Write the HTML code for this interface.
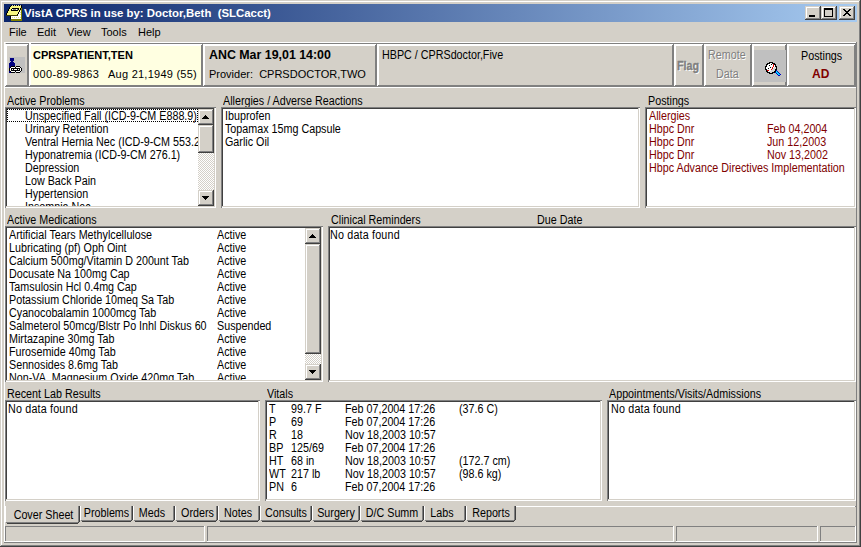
<!DOCTYPE html><html><head><meta charset="utf-8"><style>
html,body{margin:0;padding:0;width:861px;height:547px;overflow:hidden;background:#d4d0c8}
body div{position:absolute}
.t{font-family:"Liberation Sans",sans-serif;line-height:13px;white-space:pre;color:#000;font-size:12px;transform:scaleX(.895);transform-origin:0 0}
.u{font-family:"Liberation Sans",sans-serif;line-height:13px;white-space:pre;color:#000;font-size:11px}
svg{position:absolute}
</style></head><body>
<div style="left:0px;top:0px;width:861px;height:547px;background:#d4d0c8;"></div>
<div style="left:1px;top:1px;width:858px;height:1px;background:#ffffff;"></div>
<div style="left:1px;top:1px;width:1px;height:544px;background:#ffffff;"></div>
<div style="left:1px;top:545px;width:859px;height:1px;background:#808080;"></div>
<div style="left:859px;top:1px;width:1px;height:545px;background:#808080;"></div>
<div style="left:0px;top:546px;width:861px;height:1px;background:#404040;"></div>
<div style="left:860px;top:0px;width:1px;height:547px;background:#404040;"></div>
<div style="left:4px;top:4px;width:853px;height:18px;background:linear-gradient(to right,#0a246a,#a6caf0);"></div>
<svg style="position:absolute;left:5px;top:4px" width="18" height="17" shape-rendering="crispEdges"><rect x="13" y="4" width="3" height="8" fill="#ffffff"/><rect x="6" y="12" width="10" height="3" fill="#ffffff"/><rect x="7" y="13" width="1" height="1" fill="#e0e080"/><rect x="9" y="13" width="1" height="1" fill="#e0e080"/><rect x="11" y="13" width="1" height="1" fill="#e0e080"/><rect x="13" y="13" width="1" height="1" fill="#e0e080"/><rect x="15" y="13" width="1" height="1" fill="#e0e080"/><rect x="15" y="6" width="1" height="1" fill="#e0e080"/><rect x="15" y="8" width="1" height="1" fill="#e0e080"/><rect x="15" y="10" width="1" height="1" fill="#e0e080"/><rect x="16" y="4" width="1" height="13" fill="#808000"/><rect x="6" y="15" width="11" height="2" fill="#808000"/><rect x="5" y="12" width="1" height="3" fill="#000"/><rect x="6" y="1" width="11" height="1" fill="#000"/><rect x="7" y="1" width="1" height="1" fill="#c8c8c8"/><rect x="9" y="1" width="1" height="1" fill="#c8c8c8"/><rect x="11" y="1" width="1" height="1" fill="#c8c8c8"/><rect x="13" y="1" width="1" height="1" fill="#c8c8c8"/><rect x="15" y="1" width="1" height="1" fill="#c8c8c8"/><rect x="5" y="2" width="1" height="1" fill="#000"/><rect x="6" y="2" width="10" height="1" fill="#f8f880"/><rect x="16" y="2" width="1" height="1" fill="#000"/><rect x="4" y="3" width="1" height="1" fill="#000"/><rect x="5" y="3" width="11" height="1" fill="#f8f880"/><rect x="16" y="3" width="1" height="1" fill="#000"/><rect x="4" y="4" width="1" height="1" fill="#000"/><rect x="5" y="4" width="10" height="1" fill="#f8f880"/><rect x="15" y="4" width="1" height="1" fill="#000"/><rect x="3" y="5" width="1" height="1" fill="#000"/><rect x="4" y="5" width="11" height="1" fill="#f8f880"/><rect x="15" y="5" width="1" height="1" fill="#000"/><rect x="3" y="6" width="1" height="1" fill="#000"/><rect x="4" y="6" width="10" height="1" fill="#f8f880"/><rect x="14" y="6" width="1" height="1" fill="#000"/><rect x="2" y="7" width="1" height="1" fill="#000"/><rect x="3" y="7" width="11" height="1" fill="#f8f880"/><rect x="14" y="7" width="1" height="1" fill="#000"/><rect x="2" y="8" width="1" height="1" fill="#000"/><rect x="3" y="8" width="10" height="1" fill="#f8f880"/><rect x="13" y="8" width="1" height="1" fill="#000"/><rect x="1" y="9" width="1" height="1" fill="#000"/><rect x="2" y="9" width="11" height="1" fill="#f8f880"/><rect x="13" y="9" width="1" height="1" fill="#000"/><rect x="1" y="10" width="1" height="1" fill="#000"/><rect x="2" y="10" width="10" height="1" fill="#f8f880"/><rect x="12" y="10" width="1" height="1" fill="#000"/><rect x="1" y="11" width="12" height="1" fill="#404000"/><rect x="7" y="4" width="7" height="1" fill="#000"/><rect x="6" y="5" width="1" height="1" fill="#000"/><rect x="7" y="5" width="6" height="1" fill="#808080"/><rect x="13" y="5" width="1" height="1" fill="#000"/><rect x="6" y="6" width="7" height="1" fill="#000"/><rect x="7" y="5" width="1" height="1" fill="#ffffff"/><rect x="11" y="5" width="1" height="1" fill="#ffffff"/></svg>
<div class="u" style="left:24px;top:7px;color:#fff;font-weight:bold;font-size:11.4px;">VistA CPRS in use by: Doctor,Beth&nbsp; (SLCacct)</div>
<div style="left:805px;top:6px;width:16px;height:14px;background:#d4d0c8;"></div>
<div style="left:805px;top:19px;width:16px;height:1px;background:#404040;"></div>
<div style="left:820px;top:6px;width:1px;height:14px;background:#404040;"></div>
<div style="left:805px;top:6px;width:15px;height:1px;background:#d4d0c8;"></div>
<div style="left:805px;top:6px;width:1px;height:13px;background:#d4d0c8;"></div>
<div style="left:806px;top:18px;width:14px;height:1px;background:#808080;"></div>
<div style="left:819px;top:7px;width:1px;height:12px;background:#808080;"></div>
<div style="left:806px;top:7px;width:13px;height:1px;background:#ffffff;"></div>
<div style="left:806px;top:7px;width:1px;height:11px;background:#ffffff;"></div>
<div style="left:821px;top:6px;width:16px;height:14px;background:#d4d0c8;"></div>
<div style="left:821px;top:19px;width:16px;height:1px;background:#404040;"></div>
<div style="left:836px;top:6px;width:1px;height:14px;background:#404040;"></div>
<div style="left:821px;top:6px;width:15px;height:1px;background:#d4d0c8;"></div>
<div style="left:821px;top:6px;width:1px;height:13px;background:#d4d0c8;"></div>
<div style="left:822px;top:18px;width:14px;height:1px;background:#808080;"></div>
<div style="left:835px;top:7px;width:1px;height:12px;background:#808080;"></div>
<div style="left:822px;top:7px;width:13px;height:1px;background:#ffffff;"></div>
<div style="left:822px;top:7px;width:1px;height:11px;background:#ffffff;"></div>
<div style="left:839px;top:6px;width:16px;height:14px;background:#d4d0c8;"></div>
<div style="left:839px;top:19px;width:16px;height:1px;background:#404040;"></div>
<div style="left:854px;top:6px;width:1px;height:14px;background:#404040;"></div>
<div style="left:839px;top:6px;width:15px;height:1px;background:#d4d0c8;"></div>
<div style="left:839px;top:6px;width:1px;height:13px;background:#d4d0c8;"></div>
<div style="left:840px;top:18px;width:14px;height:1px;background:#808080;"></div>
<div style="left:853px;top:7px;width:1px;height:12px;background:#808080;"></div>
<div style="left:840px;top:7px;width:13px;height:1px;background:#ffffff;"></div>
<div style="left:840px;top:7px;width:1px;height:11px;background:#ffffff;"></div>
<div style="left:809px;top:15px;width:6px;height:2px;background:#000;"></div>
<div style="left:824px;top:8px;width:9px;height:9px;background:transparent;border:1px solid #000;border-top-width:2px;box-sizing:border-box;"></div>
<div style="left:843px;top:9px;width:1px;height:1px;background:#000;"></div>
<div style="left:844px;top:9px;width:1px;height:1px;background:#000;"></div>
<div style="left:849px;top:9px;width:1px;height:1px;background:#000;"></div>
<div style="left:850px;top:9px;width:1px;height:1px;background:#000;"></div>
<div style="left:844px;top:10px;width:1px;height:1px;background:#000;"></div>
<div style="left:845px;top:10px;width:1px;height:1px;background:#000;"></div>
<div style="left:848px;top:10px;width:1px;height:1px;background:#000;"></div>
<div style="left:849px;top:10px;width:1px;height:1px;background:#000;"></div>
<div style="left:845px;top:11px;width:1px;height:1px;background:#000;"></div>
<div style="left:846px;top:11px;width:1px;height:1px;background:#000;"></div>
<div style="left:847px;top:11px;width:1px;height:1px;background:#000;"></div>
<div style="left:848px;top:11px;width:1px;height:1px;background:#000;"></div>
<div style="left:846px;top:12px;width:1px;height:1px;background:#000;"></div>
<div style="left:847px;top:12px;width:1px;height:1px;background:#000;"></div>
<div style="left:845px;top:13px;width:1px;height:1px;background:#000;"></div>
<div style="left:846px;top:13px;width:1px;height:1px;background:#000;"></div>
<div style="left:847px;top:13px;width:1px;height:1px;background:#000;"></div>
<div style="left:848px;top:13px;width:1px;height:1px;background:#000;"></div>
<div style="left:844px;top:14px;width:1px;height:1px;background:#000;"></div>
<div style="left:845px;top:14px;width:1px;height:1px;background:#000;"></div>
<div style="left:848px;top:14px;width:1px;height:1px;background:#000;"></div>
<div style="left:849px;top:14px;width:1px;height:1px;background:#000;"></div>
<div style="left:843px;top:15px;width:1px;height:1px;background:#000;"></div>
<div style="left:844px;top:15px;width:1px;height:1px;background:#000;"></div>
<div style="left:849px;top:15px;width:1px;height:1px;background:#000;"></div>
<div style="left:850px;top:15px;width:1px;height:1px;background:#000;"></div>
<div class="u" style="left:9px;top:26px;">File</div>
<div class="u" style="left:37px;top:26px;">Edit</div>
<div class="u" style="left:67px;top:26px;">View</div>
<div class="u" style="left:101px;top:26px;">Tools</div>
<div class="u" style="left:138px;top:26px;">Help</div>
<div style="left:4px;top:42px;width:852px;height:1px;background:#ffffff;"></div>
<div style="left:4px;top:42px;width:1px;height:500px;background:#ffffff;"></div>
<div style="left:856px;top:42px;width:1px;height:501px;background:#808080;"></div>
<div style="left:4px;top:542px;width:853px;height:1px;background:#808080;"></div>
<div style="left:6px;top:43px;width:851px;height:1px;background:#808080;"></div>
<div style="left:4px;top:87px;width:852px;height:1px;background:#ffffff;"></div>
<div style="left:5px;top:44px;width:24px;height:43px;background:#d4d0c8;"></div>
<div style="left:5px;top:44px;width:24px;height:2px;background:#ffffff;"></div>
<div style="left:5px;top:44px;width:2px;height:43px;background:#ffffff;"></div>
<div style="left:27px;top:44px;width:2px;height:43px;background:#808080;"></div>
<div style="left:5px;top:85px;width:24px;height:2px;background:#808080;"></div>
<div style="left:27px;top:44px;width:1px;height:1px;background:#ffffff;"></div>
<div style="left:5px;top:85px;width:1px;height:1px;background:#ffffff;"></div>
<div style="left:29px;top:44px;width:174px;height:43px;background:#ffffe1;"></div>
<div style="left:29px;top:44px;width:174px;height:2px;background:#ffffff;"></div>
<div style="left:29px;top:44px;width:2px;height:43px;background:#ffffff;"></div>
<div style="left:201px;top:44px;width:2px;height:43px;background:#808080;"></div>
<div style="left:29px;top:85px;width:174px;height:2px;background:#808080;"></div>
<div style="left:201px;top:44px;width:1px;height:1px;background:#ffffff;"></div>
<div style="left:29px;top:85px;width:1px;height:1px;background:#ffffff;"></div>
<div style="left:29px;top:43px;width:2px;height:1px;background:#ffffff;"></div>
<div style="left:203px;top:44px;width:174px;height:43px;background:#d4d0c8;"></div>
<div style="left:203px;top:44px;width:174px;height:2px;background:#ffffff;"></div>
<div style="left:203px;top:44px;width:2px;height:43px;background:#ffffff;"></div>
<div style="left:375px;top:44px;width:2px;height:43px;background:#808080;"></div>
<div style="left:203px;top:85px;width:174px;height:2px;background:#808080;"></div>
<div style="left:375px;top:44px;width:1px;height:1px;background:#ffffff;"></div>
<div style="left:203px;top:85px;width:1px;height:1px;background:#ffffff;"></div>
<div style="left:377px;top:44px;width:297px;height:43px;background:#d4d0c8;"></div>
<div style="left:377px;top:44px;width:297px;height:2px;background:#ffffff;"></div>
<div style="left:377px;top:44px;width:2px;height:43px;background:#ffffff;"></div>
<div style="left:672px;top:44px;width:2px;height:43px;background:#808080;"></div>
<div style="left:377px;top:85px;width:297px;height:2px;background:#808080;"></div>
<div style="left:672px;top:44px;width:1px;height:1px;background:#ffffff;"></div>
<div style="left:377px;top:85px;width:1px;height:1px;background:#ffffff;"></div>
<div style="left:674px;top:44px;width:30px;height:43px;background:#d4d0c8;"></div>
<div style="left:674px;top:44px;width:30px;height:2px;background:#ffffff;"></div>
<div style="left:674px;top:44px;width:2px;height:43px;background:#ffffff;"></div>
<div style="left:702px;top:44px;width:2px;height:43px;background:#808080;"></div>
<div style="left:674px;top:85px;width:30px;height:2px;background:#808080;"></div>
<div style="left:702px;top:44px;width:1px;height:1px;background:#ffffff;"></div>
<div style="left:674px;top:85px;width:1px;height:1px;background:#ffffff;"></div>
<div style="left:704px;top:44px;width:48px;height:43px;background:#d4d0c8;"></div>
<div style="left:704px;top:44px;width:48px;height:2px;background:#ffffff;"></div>
<div style="left:704px;top:44px;width:2px;height:43px;background:#ffffff;"></div>
<div style="left:750px;top:44px;width:2px;height:43px;background:#808080;"></div>
<div style="left:704px;top:85px;width:48px;height:2px;background:#808080;"></div>
<div style="left:750px;top:44px;width:1px;height:1px;background:#ffffff;"></div>
<div style="left:704px;top:85px;width:1px;height:1px;background:#ffffff;"></div>
<div style="left:752px;top:44px;width:35px;height:43px;background:#d4d0c8;"></div>
<div style="left:752px;top:44px;width:35px;height:2px;background:#ffffff;"></div>
<div style="left:752px;top:44px;width:2px;height:43px;background:#ffffff;"></div>
<div style="left:785px;top:44px;width:2px;height:43px;background:#808080;"></div>
<div style="left:752px;top:85px;width:35px;height:2px;background:#808080;"></div>
<div style="left:785px;top:44px;width:1px;height:1px;background:#ffffff;"></div>
<div style="left:752px;top:85px;width:1px;height:1px;background:#ffffff;"></div>
<div style="left:787px;top:44px;width:69px;height:43px;background:#d4d0c8;"></div>
<div style="left:787px;top:44px;width:69px;height:2px;background:#ffffff;"></div>
<div style="left:787px;top:44px;width:2px;height:43px;background:#ffffff;"></div>
<div style="left:854px;top:44px;width:2px;height:43px;background:#808080;"></div>
<div style="left:787px;top:85px;width:69px;height:2px;background:#808080;"></div>
<div style="left:854px;top:44px;width:1px;height:1px;background:#ffffff;"></div>
<div style="left:787px;top:85px;width:1px;height:1px;background:#ffffff;"></div>
<div style="left:9px;top:57px;width:16px;height:16px;background:#c0c0c0;"></div>
<svg style="position:absolute;left:9px;top:57px" width="16" height="16" shape-rendering="crispEdges"><rect x="1" y="1" width="4" height="3" fill="#000080"/><rect x="2" y="4" width="2" height="1" fill="#000080"/><rect x="1" y="5" width="4" height="1" fill="#000080"/><rect x="0" y="6" width="6" height="10" fill="#000080"/><rect x="2" y="9" width="1" height="1" fill="#000"/><rect x="3" y="9" width="1" height="1" fill="#000"/><rect x="4" y="9" width="1" height="1" fill="#000"/><rect x="5" y="9" width="1" height="1" fill="#000"/><rect x="7" y="9" width="1" height="1" fill="#000"/><rect x="8" y="9" width="1" height="1" fill="#000"/><rect x="9" y="9" width="1" height="1" fill="#000"/><rect x="10" y="9" width="1" height="1" fill="#000"/><rect x="1" y="10" width="1" height="1" fill="#000"/><rect x="2" y="10" width="1" height="1" fill="#fff"/><rect x="3" y="10" width="1" height="1" fill="#fff"/><rect x="4" y="10" width="1" height="1" fill="#fff"/><rect x="5" y="10" width="1" height="1" fill="#fff"/><rect x="6" y="10" width="1" height="1" fill="#000"/><rect x="7" y="10" width="1" height="1" fill="#fff"/><rect x="8" y="10" width="1" height="1" fill="#fff"/><rect x="9" y="10" width="1" height="1" fill="#fff"/><rect x="10" y="10" width="1" height="1" fill="#fff"/><rect x="11" y="10" width="1" height="1" fill="#000"/><rect x="0" y="11" width="1" height="1" fill="#000"/><rect x="1" y="11" width="1" height="1" fill="#fff"/><rect x="2" y="11" width="1" height="1" fill="#000"/><rect x="3" y="11" width="1" height="1" fill="#000"/><rect x="4" y="11" width="1" height="1" fill="#000"/><rect x="5" y="11" width="1" height="1" fill="#000"/><rect x="6" y="11" width="1" height="1" fill="#000"/><rect x="7" y="11" width="1" height="1" fill="#000"/><rect x="8" y="11" width="1" height="1" fill="#000"/><rect x="9" y="11" width="1" height="1" fill="#000"/><rect x="10" y="11" width="1" height="1" fill="#000"/><rect x="11" y="11" width="1" height="1" fill="#fff"/><rect x="12" y="11" width="1" height="1" fill="#000"/><rect x="0" y="12" width="1" height="1" fill="#000"/><rect x="1" y="12" width="1" height="1" fill="#fff"/><rect x="2" y="12" width="1" height="1" fill="#000"/><rect x="3" y="12" width="1" height="1" fill="#fff"/><rect x="4" y="12" width="1" height="1" fill="#000"/><rect x="5" y="12" width="1" height="1" fill="#fff"/><rect x="6" y="12" width="1" height="1" fill="#fff"/><rect x="7" y="12" width="1" height="1" fill="#fff"/><rect x="8" y="12" width="1" height="1" fill="#000"/><rect x="9" y="12" width="1" height="1" fill="#fff"/><rect x="10" y="12" width="1" height="1" fill="#000"/><rect x="11" y="12" width="1" height="1" fill="#fff"/><rect x="12" y="12" width="1" height="1" fill="#000"/><rect x="0" y="13" width="1" height="1" fill="#000"/><rect x="1" y="13" width="1" height="1" fill="#fff"/><rect x="2" y="13" width="1" height="1" fill="#000"/><rect x="3" y="13" width="1" height="1" fill="#000"/><rect x="4" y="13" width="1" height="1" fill="#000"/><rect x="5" y="13" width="1" height="1" fill="#000"/><rect x="6" y="13" width="1" height="1" fill="#000"/><rect x="7" y="13" width="1" height="1" fill="#000"/><rect x="8" y="13" width="1" height="1" fill="#000"/><rect x="9" y="13" width="1" height="1" fill="#000"/><rect x="10" y="13" width="1" height="1" fill="#000"/><rect x="11" y="13" width="1" height="1" fill="#fff"/><rect x="12" y="13" width="1" height="1" fill="#000"/><rect x="1" y="14" width="1" height="1" fill="#000"/><rect x="2" y="14" width="1" height="1" fill="#fff"/><rect x="3" y="14" width="1" height="1" fill="#fff"/><rect x="4" y="14" width="1" height="1" fill="#fff"/><rect x="5" y="14" width="1" height="1" fill="#fff"/><rect x="6" y="14" width="1" height="1" fill="#000"/><rect x="7" y="14" width="1" height="1" fill="#fff"/><rect x="8" y="14" width="1" height="1" fill="#fff"/><rect x="9" y="14" width="1" height="1" fill="#fff"/><rect x="10" y="14" width="1" height="1" fill="#fff"/><rect x="11" y="14" width="1" height="1" fill="#000"/><rect x="2" y="15" width="1" height="1" fill="#000"/><rect x="3" y="15" width="1" height="1" fill="#000"/><rect x="4" y="15" width="1" height="1" fill="#000"/><rect x="5" y="15" width="1" height="1" fill="#000"/><rect x="7" y="15" width="1" height="1" fill="#000"/><rect x="8" y="15" width="1" height="1" fill="#000"/><rect x="9" y="15" width="1" height="1" fill="#000"/><rect x="10" y="15" width="1" height="1" fill="#000"/></svg>
<div class="u" style="left:33px;top:49px;font-weight:bold;">CPRSPATIENT,TEN</div>
<div class="u" style="left:33px;top:68px;letter-spacing:0.35px;">000-89-9863</div>
<div class="u" style="left:108px;top:68px;letter-spacing:0.25px;">Aug 21,1949 (55)</div>
<div class="u" style="left:209px;top:49px;font-weight:bold;font-size:12.4px;">ANC Mar 19,01 14:00</div>
<div class="u" style="left:209px;top:68px;">Provider:&nbsp; CPRSDOCTOR,TWO</div>
<div class="t" style="left:382px;top:49px;">HBPC / CPRSdoctor,Five</div>
<div class="t" style="left:677px;top:60px;font-weight:bold;color:#808080;text-shadow:1px 1px #fff;-webkit-text-stroke:0.35px #808080;">Flag</div>
<div class="t" style="left:708px;top:49px;color:#808080;text-shadow:1px 1px #fff;">Remote</div>
<div class="t" style="left:716px;top:68px;color:#808080;text-shadow:1px 1px #fff;">Data</div>
<div style="left:754px;top:50px;width:32px;height:32px;background:#c0c0c0;"></div>
<svg style="position:absolute;left:765px;top:62px" width="16" height="16" shape-rendering="crispEdges"><rect x="4" y="0" width="1" height="1" fill="#000"/><rect x="5" y="0" width="1" height="1" fill="#000"/><rect x="6" y="0" width="1" height="1" fill="#000"/><rect x="7" y="0" width="1" height="1" fill="#000"/><rect x="2" y="1" width="1" height="1" fill="#000"/><rect x="3" y="1" width="1" height="1" fill="#000"/><rect x="4" y="1" width="1" height="1" fill="#000"/><rect x="5" y="1" width="1" height="1" fill="#fff"/><rect x="6" y="1" width="1" height="1" fill="#fff"/><rect x="7" y="1" width="1" height="1" fill="#000"/><rect x="8" y="1" width="1" height="1" fill="#000"/><rect x="9" y="1" width="1" height="1" fill="#000"/><rect x="1" y="2" width="1" height="1" fill="#000"/><rect x="2" y="2" width="1" height="1" fill="#000"/><rect x="3" y="2" width="1" height="1" fill="#fff"/><rect x="4" y="2" width="1" height="1" fill="#fff"/><rect x="5" y="2" width="1" height="1" fill="#fff"/><rect x="6" y="2" width="1" height="1" fill="#000"/><rect x="7" y="2" width="1" height="1" fill="#fff"/><rect x="8" y="2" width="1" height="1" fill="#e00000"/><rect x="9" y="2" width="1" height="1" fill="#000"/><rect x="10" y="2" width="1" height="1" fill="#000"/><rect x="1" y="3" width="1" height="1" fill="#000"/><rect x="2" y="3" width="1" height="1" fill="#fff"/><rect x="3" y="3" width="1" height="1" fill="#fff"/><rect x="4" y="3" width="1" height="1" fill="#000"/><rect x="5" y="3" width="1" height="1" fill="#fff"/><rect x="6" y="3" width="1" height="1" fill="#fff"/><rect x="7" y="3" width="1" height="1" fill="#fff"/><rect x="8" y="3" width="1" height="1" fill="#e00000"/><rect x="9" y="3" width="1" height="1" fill="#fff"/><rect x="10" y="3" width="1" height="1" fill="#000"/><rect x="0" y="4" width="1" height="1" fill="#000"/><rect x="1" y="4" width="1" height="1" fill="#000"/><rect x="2" y="4" width="1" height="1" fill="#fff"/><rect x="3" y="4" width="1" height="1" fill="#fff"/><rect x="4" y="4" width="1" height="1" fill="#fff"/><rect x="5" y="4" width="1" height="1" fill="#fff"/><rect x="6" y="4" width="1" height="1" fill="#fff"/><rect x="7" y="4" width="1" height="1" fill="#fff"/><rect x="8" y="4" width="1" height="1" fill="#e00000"/><rect x="9" y="4" width="1" height="1" fill="#fff"/><rect x="10" y="4" width="1" height="1" fill="#000"/><rect x="11" y="4" width="1" height="1" fill="#000"/><rect x="0" y="5" width="1" height="1" fill="#000"/><rect x="1" y="5" width="1" height="1" fill="#fff"/><rect x="2" y="5" width="1" height="1" fill="#fff"/><rect x="3" y="5" width="1" height="1" fill="#fff"/><rect x="4" y="5" width="1" height="1" fill="#fff"/><rect x="5" y="5" width="1" height="1" fill="#000"/><rect x="6" y="5" width="1" height="1" fill="#fff"/><rect x="7" y="5" width="1" height="1" fill="#e00000"/><rect x="8" y="5" width="1" height="1" fill="#fff"/><rect x="9" y="5" width="1" height="1" fill="#d8d8d8"/><rect x="10" y="5" width="1" height="1" fill="#d8d8d8"/><rect x="11" y="5" width="1" height="1" fill="#000"/><rect x="0" y="6" width="1" height="1" fill="#000"/><rect x="1" y="6" width="1" height="1" fill="#fff"/><rect x="2" y="6" width="1" height="1" fill="#fff"/><rect x="3" y="6" width="1" height="1" fill="#000"/><rect x="4" y="6" width="1" height="1" fill="#fff"/><rect x="5" y="6" width="1" height="1" fill="#fff"/><rect x="6" y="6" width="1" height="1" fill="#fff"/><rect x="7" y="6" width="1" height="1" fill="#e00000"/><rect x="8" y="6" width="1" height="1" fill="#d8d8d8"/><rect x="9" y="6" width="1" height="1" fill="#d8d8d8"/><rect x="10" y="6" width="1" height="1" fill="#d8d8d8"/><rect x="11" y="6" width="1" height="1" fill="#000"/><rect x="0" y="7" width="1" height="1" fill="#000"/><rect x="1" y="7" width="1" height="1" fill="#000"/><rect x="2" y="7" width="1" height="1" fill="#fff"/><rect x="3" y="7" width="1" height="1" fill="#fff"/><rect x="4" y="7" width="1" height="1" fill="#fff"/><rect x="5" y="7" width="1" height="1" fill="#fff"/><rect x="6" y="7" width="1" height="1" fill="#e00000"/><rect x="7" y="7" width="1" height="1" fill="#d8d8d8"/><rect x="8" y="7" width="1" height="1" fill="#d8d8d8"/><rect x="9" y="7" width="1" height="1" fill="#d8d8d8"/><rect x="10" y="7" width="1" height="1" fill="#000"/><rect x="11" y="7" width="1" height="1" fill="#000"/><rect x="1" y="8" width="1" height="1" fill="#000"/><rect x="2" y="8" width="1" height="1" fill="#e00000"/><rect x="3" y="8" width="1" height="1" fill="#e00000"/><rect x="4" y="8" width="1" height="1" fill="#fff"/><rect x="5" y="8" width="1" height="1" fill="#fff"/><rect x="6" y="8" width="1" height="1" fill="#d8d8d8"/><rect x="7" y="8" width="1" height="1" fill="#d8d8d8"/><rect x="8" y="8" width="1" height="1" fill="#d8d8d8"/><rect x="9" y="8" width="1" height="1" fill="#d8d8d8"/><rect x="10" y="8" width="1" height="1" fill="#000"/><rect x="11" y="8" width="1" height="1" fill="#0000c0"/><rect x="1" y="9" width="1" height="1" fill="#000"/><rect x="2" y="9" width="1" height="1" fill="#000"/><rect x="3" y="9" width="1" height="1" fill="#fff"/><rect x="4" y="9" width="1" height="1" fill="#fff"/><rect x="5" y="9" width="1" height="1" fill="#d8d8d8"/><rect x="6" y="9" width="1" height="1" fill="#d8d8d8"/><rect x="7" y="9" width="1" height="1" fill="#d8d8d8"/><rect x="8" y="9" width="1" height="1" fill="#d8d8d8"/><rect x="9" y="9" width="1" height="1" fill="#000"/><rect x="10" y="9" width="1" height="1" fill="#000"/><rect x="11" y="9" width="1" height="1" fill="#00e0ff"/><rect x="12" y="9" width="1" height="1" fill="#0000c0"/><rect x="2" y="10" width="1" height="1" fill="#000"/><rect x="3" y="10" width="1" height="1" fill="#000"/><rect x="4" y="10" width="1" height="1" fill="#000"/><rect x="5" y="10" width="1" height="1" fill="#d8d8d8"/><rect x="6" y="10" width="1" height="1" fill="#d8d8d8"/><rect x="7" y="10" width="1" height="1" fill="#000"/><rect x="8" y="10" width="1" height="1" fill="#000"/><rect x="9" y="10" width="1" height="1" fill="#000"/><rect x="10" y="10" width="1" height="1" fill="#0000c0"/><rect x="11" y="10" width="1" height="1" fill="#00e0ff"/><rect x="12" y="10" width="1" height="1" fill="#00e0ff"/><rect x="13" y="10" width="1" height="1" fill="#0000c0"/><rect x="4" y="11" width="1" height="1" fill="#000"/><rect x="5" y="11" width="1" height="1" fill="#000"/><rect x="6" y="11" width="1" height="1" fill="#000"/><rect x="7" y="11" width="1" height="1" fill="#000"/><rect x="11" y="11" width="1" height="1" fill="#0000c0"/><rect x="12" y="11" width="1" height="1" fill="#00e0ff"/><rect x="13" y="11" width="1" height="1" fill="#00e0ff"/><rect x="14" y="11" width="1" height="1" fill="#0000c0"/><rect x="12" y="12" width="1" height="1" fill="#0000c0"/><rect x="13" y="12" width="1" height="1" fill="#00e0ff"/><rect x="14" y="12" width="1" height="1" fill="#00e0ff"/><rect x="15" y="12" width="1" height="1" fill="#0000c0"/><rect x="13" y="13" width="1" height="1" fill="#0000c0"/><rect x="14" y="13" width="1" height="1" fill="#0000c0"/></svg>
<div class="t" style="left:801px;top:50px;">Postings</div>
<div class="u" style="left:812px;top:68px;font-weight:bold;color:#800000;font-size:12px;">AD</div>
<div class="t" style="left:7px;top:95px;">Active Problems</div>
<div class="t" style="left:223px;top:95px;">Allergies / Adverse Reactions</div>
<div class="t" style="left:648px;top:95px;">Postings</div>
<div style="left:5px;top:107px;width:211px;height:101px;background:#ffffff;"></div>
<div style="left:5px;top:107px;width:211px;height:1px;background:#808080;"></div>
<div style="left:5px;top:107px;width:1px;height:101px;background:#808080;"></div>
<div style="left:5px;top:207px;width:211px;height:1px;background:#ffffff;"></div>
<div style="left:215px;top:107px;width:1px;height:101px;background:#ffffff;"></div>
<div style="left:6px;top:108px;width:209px;height:1px;background:#404040;"></div>
<div style="left:6px;top:108px;width:1px;height:99px;background:#404040;"></div>
<div style="left:6px;top:206px;width:209px;height:1px;background:#d4d0c8;"></div>
<div style="left:214px;top:108px;width:1px;height:99px;background:#d4d0c8;"></div>
<div style="left:5px;top:207px;width:1px;height:1px;background:#808080;"></div>
<div style="left:215px;top:107px;width:1px;height:1px;background:#808080;"></div>
<div style="left:7px;top:109px;width:191px;height:97px;overflow:hidden">
<div class="t" style="left:18px;top:1px;">Unspecified Fall (ICD-9-CM E888.9)</div>
<div class="t" style="left:18px;top:14px;">Urinary Retention</div>
<div class="t" style="left:18px;top:27px;">Ventral Hernia Nec (ICD-9-CM 553.2)</div>
<div class="t" style="left:18px;top:40px;">Hyponatremia (ICD-9-CM 276.1)</div>
<div class="t" style="left:18px;top:53px;">Depression</div>
<div class="t" style="left:18px;top:66px;">Low Back Pain</div>
<div class="t" style="left:18px;top:79px;">Hypertension</div>
<div class="t" style="left:18px;top:92px;">Insomnia Nec</div>
<div style="left:0;top:0;width:191px;height:13px;box-sizing:border-box;border:1px dotted #000"></div>
</div>
<div style="left:198px;top:109px;width:16px;height:97px;background:#fff;background-image:repeating-conic-gradient(#d4d0c8 0 25%,#fff 0 50%);background-size:2px 2px;"></div>
<div style="left:198px;top:109px;width:16px;height:16px;background:#d4d0c8;"></div>
<div style="left:198px;top:124px;width:16px;height:1px;background:#404040;"></div>
<div style="left:213px;top:109px;width:1px;height:16px;background:#404040;"></div>
<div style="left:198px;top:109px;width:15px;height:1px;background:#d4d0c8;"></div>
<div style="left:198px;top:109px;width:1px;height:15px;background:#d4d0c8;"></div>
<div style="left:199px;top:123px;width:14px;height:1px;background:#808080;"></div>
<div style="left:212px;top:110px;width:1px;height:14px;background:#808080;"></div>
<div style="left:199px;top:110px;width:13px;height:1px;background:#ffffff;"></div>
<div style="left:199px;top:110px;width:1px;height:13px;background:#ffffff;"></div>
<div style="left:205px;top:115px;width:1px;height:1px;background:#000;"></div>
<div style="left:204px;top:116px;width:3px;height:1px;background:#000;"></div>
<div style="left:203px;top:117px;width:5px;height:1px;background:#000;"></div>
<div style="left:202px;top:118px;width:7px;height:1px;background:#000;"></div>
<div style="left:198px;top:190px;width:16px;height:16px;background:#d4d0c8;"></div>
<div style="left:198px;top:205px;width:16px;height:1px;background:#404040;"></div>
<div style="left:213px;top:190px;width:1px;height:16px;background:#404040;"></div>
<div style="left:198px;top:190px;width:15px;height:1px;background:#d4d0c8;"></div>
<div style="left:198px;top:190px;width:1px;height:15px;background:#d4d0c8;"></div>
<div style="left:199px;top:204px;width:14px;height:1px;background:#808080;"></div>
<div style="left:212px;top:191px;width:1px;height:14px;background:#808080;"></div>
<div style="left:199px;top:191px;width:13px;height:1px;background:#ffffff;"></div>
<div style="left:199px;top:191px;width:1px;height:13px;background:#ffffff;"></div>
<div style="left:202px;top:196px;width:7px;height:1px;background:#000;"></div>
<div style="left:203px;top:197px;width:5px;height:1px;background:#000;"></div>
<div style="left:204px;top:198px;width:3px;height:1px;background:#000;"></div>
<div style="left:205px;top:199px;width:1px;height:1px;background:#000;"></div>
<div style="left:198px;top:125px;width:16px;height:28px;background:#d4d0c8;"></div>
<div style="left:198px;top:152px;width:16px;height:1px;background:#404040;"></div>
<div style="left:213px;top:125px;width:1px;height:28px;background:#404040;"></div>
<div style="left:198px;top:125px;width:15px;height:1px;background:#d4d0c8;"></div>
<div style="left:198px;top:125px;width:1px;height:27px;background:#d4d0c8;"></div>
<div style="left:199px;top:151px;width:14px;height:1px;background:#808080;"></div>
<div style="left:212px;top:126px;width:1px;height:26px;background:#808080;"></div>
<div style="left:199px;top:126px;width:13px;height:1px;background:#ffffff;"></div>
<div style="left:199px;top:126px;width:1px;height:25px;background:#ffffff;"></div>
<div style="left:221px;top:107px;width:419px;height:101px;background:#ffffff;"></div>
<div style="left:221px;top:107px;width:419px;height:1px;background:#808080;"></div>
<div style="left:221px;top:107px;width:1px;height:101px;background:#808080;"></div>
<div style="left:221px;top:207px;width:419px;height:1px;background:#ffffff;"></div>
<div style="left:639px;top:107px;width:1px;height:101px;background:#ffffff;"></div>
<div style="left:222px;top:108px;width:417px;height:1px;background:#404040;"></div>
<div style="left:222px;top:108px;width:1px;height:99px;background:#404040;"></div>
<div style="left:222px;top:206px;width:417px;height:1px;background:#d4d0c8;"></div>
<div style="left:638px;top:108px;width:1px;height:99px;background:#d4d0c8;"></div>
<div style="left:221px;top:207px;width:1px;height:1px;background:#808080;"></div>
<div style="left:639px;top:107px;width:1px;height:1px;background:#808080;"></div>
<div class="t" style="left:225px;top:110px;">Ibuprofen</div>
<div class="t" style="left:225px;top:123px;">Topamax 15mg Capsule</div>
<div class="t" style="left:225px;top:136px;">Garlic Oil</div>
<div style="left:645px;top:107px;width:211px;height:101px;background:#ffffff;"></div>
<div style="left:645px;top:107px;width:211px;height:1px;background:#808080;"></div>
<div style="left:645px;top:107px;width:1px;height:101px;background:#808080;"></div>
<div style="left:645px;top:207px;width:211px;height:1px;background:#ffffff;"></div>
<div style="left:855px;top:107px;width:1px;height:101px;background:#ffffff;"></div>
<div style="left:646px;top:108px;width:209px;height:1px;background:#404040;"></div>
<div style="left:646px;top:108px;width:1px;height:99px;background:#404040;"></div>
<div style="left:646px;top:206px;width:209px;height:1px;background:#d4d0c8;"></div>
<div style="left:854px;top:108px;width:1px;height:99px;background:#d4d0c8;"></div>
<div style="left:645px;top:207px;width:1px;height:1px;background:#808080;"></div>
<div style="left:855px;top:107px;width:1px;height:1px;background:#808080;"></div>
<div class="t" style="left:649px;top:110px;color:#800000;">Allergies</div>
<div class="t" style="left:649px;top:123px;color:#800000;">Hbpc Dnr</div>
<div class="t" style="left:767px;top:123px;color:#800000;">Feb 04,2004</div>
<div class="t" style="left:649px;top:136px;color:#800000;">Hbpc Dnr</div>
<div class="t" style="left:767px;top:136px;color:#800000;">Jun 12,2003</div>
<div class="t" style="left:649px;top:149px;color:#800000;">Hbpc Dnr</div>
<div class="t" style="left:767px;top:149px;color:#800000;">Nov 13,2002</div>
<div class="t" style="left:649px;top:162px;color:#800000;">Hbpc Advance Directives Implementation</div>
<div class="t" style="left:7px;top:214px;">Active Medications</div>
<div class="t" style="left:331px;top:214px;">Clinical Reminders</div>
<div class="t" style="left:537px;top:214px;">Due Date</div>
<div style="left:5px;top:226px;width:318px;height:156px;background:#ffffff;"></div>
<div style="left:5px;top:226px;width:318px;height:1px;background:#808080;"></div>
<div style="left:5px;top:226px;width:1px;height:156px;background:#808080;"></div>
<div style="left:5px;top:381px;width:318px;height:1px;background:#ffffff;"></div>
<div style="left:322px;top:226px;width:1px;height:156px;background:#ffffff;"></div>
<div style="left:6px;top:227px;width:316px;height:1px;background:#404040;"></div>
<div style="left:6px;top:227px;width:1px;height:154px;background:#404040;"></div>
<div style="left:6px;top:380px;width:316px;height:1px;background:#d4d0c8;"></div>
<div style="left:321px;top:227px;width:1px;height:154px;background:#d4d0c8;"></div>
<div style="left:5px;top:381px;width:1px;height:1px;background:#808080;"></div>
<div style="left:322px;top:226px;width:1px;height:1px;background:#808080;"></div>
<div style="left:7px;top:228px;width:298px;height:152px;overflow:hidden">
<div class="t" style="left:2px;top:1px;">Artificial Tears Methylcellulose</div>
<div class="t" style="left:210px;top:1px;">Active</div>
<div class="t" style="left:2px;top:14px;">Lubricating (pf) Oph Oint</div>
<div class="t" style="left:210px;top:14px;">Active</div>
<div class="t" style="left:2px;top:27px;">Calcium 500mg/Vitamin D 200unt Tab</div>
<div class="t" style="left:210px;top:27px;">Active</div>
<div class="t" style="left:2px;top:40px;">Docusate Na 100mg Cap</div>
<div class="t" style="left:210px;top:40px;">Active</div>
<div class="t" style="left:2px;top:53px;">Tamsulosin Hcl 0.4mg Cap</div>
<div class="t" style="left:210px;top:53px;">Active</div>
<div class="t" style="left:2px;top:66px;">Potassium Chloride 10meq Sa Tab</div>
<div class="t" style="left:210px;top:66px;">Active</div>
<div class="t" style="left:2px;top:79px;">Cyanocobalamin 1000mcg Tab</div>
<div class="t" style="left:210px;top:79px;">Active</div>
<div class="t" style="left:2px;top:92px;">Salmeterol 50mcg/Blstr Po Inhl Diskus 60</div>
<div class="t" style="left:210px;top:92px;">Suspended</div>
<div class="t" style="left:2px;top:105px;">Mirtazapine 30mg Tab</div>
<div class="t" style="left:210px;top:105px;">Active</div>
<div class="t" style="left:2px;top:118px;">Furosemide 40mg Tab</div>
<div class="t" style="left:210px;top:118px;">Active</div>
<div class="t" style="left:2px;top:131px;">Sennosides 8.6mg Tab</div>
<div class="t" style="left:210px;top:131px;">Active</div>
<div class="t" style="left:2px;top:144px;">Non-VA&nbsp; Magnesium Oxide 420mg Tab</div>
<div class="t" style="left:210px;top:144px;">Active</div>
</div>
<div style="left:305px;top:228px;width:16px;height:152px;background:#fff;background-image:repeating-conic-gradient(#d4d0c8 0 25%,#fff 0 50%);background-size:2px 2px;"></div>
<div style="left:305px;top:228px;width:16px;height:16px;background:#d4d0c8;"></div>
<div style="left:305px;top:243px;width:16px;height:1px;background:#404040;"></div>
<div style="left:320px;top:228px;width:1px;height:16px;background:#404040;"></div>
<div style="left:305px;top:228px;width:15px;height:1px;background:#d4d0c8;"></div>
<div style="left:305px;top:228px;width:1px;height:15px;background:#d4d0c8;"></div>
<div style="left:306px;top:242px;width:14px;height:1px;background:#808080;"></div>
<div style="left:319px;top:229px;width:1px;height:14px;background:#808080;"></div>
<div style="left:306px;top:229px;width:13px;height:1px;background:#ffffff;"></div>
<div style="left:306px;top:229px;width:1px;height:13px;background:#ffffff;"></div>
<div style="left:312px;top:234px;width:1px;height:1px;background:#000;"></div>
<div style="left:311px;top:235px;width:3px;height:1px;background:#000;"></div>
<div style="left:310px;top:236px;width:5px;height:1px;background:#000;"></div>
<div style="left:309px;top:237px;width:7px;height:1px;background:#000;"></div>
<div style="left:305px;top:364px;width:16px;height:16px;background:#d4d0c8;"></div>
<div style="left:305px;top:379px;width:16px;height:1px;background:#404040;"></div>
<div style="left:320px;top:364px;width:1px;height:16px;background:#404040;"></div>
<div style="left:305px;top:364px;width:15px;height:1px;background:#d4d0c8;"></div>
<div style="left:305px;top:364px;width:1px;height:15px;background:#d4d0c8;"></div>
<div style="left:306px;top:378px;width:14px;height:1px;background:#808080;"></div>
<div style="left:319px;top:365px;width:1px;height:14px;background:#808080;"></div>
<div style="left:306px;top:365px;width:13px;height:1px;background:#ffffff;"></div>
<div style="left:306px;top:365px;width:1px;height:13px;background:#ffffff;"></div>
<div style="left:309px;top:370px;width:7px;height:1px;background:#000;"></div>
<div style="left:310px;top:371px;width:5px;height:1px;background:#000;"></div>
<div style="left:311px;top:372px;width:3px;height:1px;background:#000;"></div>
<div style="left:312px;top:373px;width:1px;height:1px;background:#000;"></div>
<div style="left:305px;top:244px;width:16px;height:110px;background:#d4d0c8;"></div>
<div style="left:305px;top:353px;width:16px;height:1px;background:#404040;"></div>
<div style="left:320px;top:244px;width:1px;height:110px;background:#404040;"></div>
<div style="left:305px;top:244px;width:15px;height:1px;background:#d4d0c8;"></div>
<div style="left:305px;top:244px;width:1px;height:109px;background:#d4d0c8;"></div>
<div style="left:306px;top:352px;width:14px;height:1px;background:#808080;"></div>
<div style="left:319px;top:245px;width:1px;height:108px;background:#808080;"></div>
<div style="left:306px;top:245px;width:13px;height:1px;background:#ffffff;"></div>
<div style="left:306px;top:245px;width:1px;height:107px;background:#ffffff;"></div>
<div style="left:328px;top:226px;width:528px;height:156px;background:#ffffff;"></div>
<div style="left:328px;top:226px;width:528px;height:1px;background:#808080;"></div>
<div style="left:328px;top:226px;width:1px;height:156px;background:#808080;"></div>
<div style="left:328px;top:381px;width:528px;height:1px;background:#ffffff;"></div>
<div style="left:855px;top:226px;width:1px;height:156px;background:#ffffff;"></div>
<div style="left:329px;top:227px;width:526px;height:1px;background:#404040;"></div>
<div style="left:329px;top:227px;width:1px;height:154px;background:#404040;"></div>
<div style="left:329px;top:380px;width:526px;height:1px;background:#d4d0c8;"></div>
<div style="left:854px;top:227px;width:1px;height:154px;background:#d4d0c8;"></div>
<div style="left:328px;top:381px;width:1px;height:1px;background:#808080;"></div>
<div style="left:855px;top:226px;width:1px;height:1px;background:#808080;"></div>
<div class="t" style="left:330px;top:229px;letter-spacing:0.2px;">No data found</div>
<div class="t" style="left:7px;top:388px;">Recent Lab Results</div>
<div class="t" style="left:267px;top:388px;">Vitals</div>
<div class="t" style="left:609px;top:388px;">Appointments/Visits/Admissions</div>
<div style="left:5px;top:400px;width:255px;height:101px;background:#ffffff;"></div>
<div style="left:5px;top:400px;width:255px;height:1px;background:#808080;"></div>
<div style="left:5px;top:400px;width:1px;height:101px;background:#808080;"></div>
<div style="left:5px;top:500px;width:255px;height:1px;background:#ffffff;"></div>
<div style="left:259px;top:400px;width:1px;height:101px;background:#ffffff;"></div>
<div style="left:6px;top:401px;width:253px;height:1px;background:#404040;"></div>
<div style="left:6px;top:401px;width:1px;height:99px;background:#404040;"></div>
<div style="left:6px;top:499px;width:253px;height:1px;background:#d4d0c8;"></div>
<div style="left:258px;top:401px;width:1px;height:99px;background:#d4d0c8;"></div>
<div style="left:5px;top:500px;width:1px;height:1px;background:#808080;"></div>
<div style="left:259px;top:400px;width:1px;height:1px;background:#808080;"></div>
<div class="t" style="left:8px;top:403px;letter-spacing:0.2px;">No data found</div>
<div style="left:265px;top:400px;width:337px;height:101px;background:#ffffff;"></div>
<div style="left:265px;top:400px;width:337px;height:1px;background:#808080;"></div>
<div style="left:265px;top:400px;width:1px;height:101px;background:#808080;"></div>
<div style="left:265px;top:500px;width:337px;height:1px;background:#ffffff;"></div>
<div style="left:601px;top:400px;width:1px;height:101px;background:#ffffff;"></div>
<div style="left:266px;top:401px;width:335px;height:1px;background:#404040;"></div>
<div style="left:266px;top:401px;width:1px;height:99px;background:#404040;"></div>
<div style="left:266px;top:499px;width:335px;height:1px;background:#d4d0c8;"></div>
<div style="left:600px;top:401px;width:1px;height:99px;background:#d4d0c8;"></div>
<div style="left:265px;top:500px;width:1px;height:1px;background:#808080;"></div>
<div style="left:601px;top:400px;width:1px;height:1px;background:#808080;"></div>
<div class="t" style="left:269px;top:403px;">T</div>
<div class="t" style="left:291px;top:403px;">99.7 F</div>
<div class="t" style="left:345px;top:403px;">Feb 07,2004 17:26</div>
<div class="t" style="left:459px;top:403px;">(37.6 C)</div>
<div class="t" style="left:269px;top:416px;">P</div>
<div class="t" style="left:291px;top:416px;">69</div>
<div class="t" style="left:345px;top:416px;">Feb 07,2004 17:26</div>
<div class="t" style="left:269px;top:429px;">R</div>
<div class="t" style="left:291px;top:429px;">18</div>
<div class="t" style="left:345px;top:429px;">Nov 18,2003 10:57</div>
<div class="t" style="left:269px;top:442px;">BP</div>
<div class="t" style="left:291px;top:442px;">125/69</div>
<div class="t" style="left:345px;top:442px;">Feb 07,2004 17:26</div>
<div class="t" style="left:269px;top:455px;">HT</div>
<div class="t" style="left:291px;top:455px;">68 in</div>
<div class="t" style="left:345px;top:455px;">Nov 18,2003 10:57</div>
<div class="t" style="left:459px;top:455px;">(172.7 cm)</div>
<div class="t" style="left:269px;top:468px;">WT</div>
<div class="t" style="left:291px;top:468px;">217 lb</div>
<div class="t" style="left:345px;top:468px;">Nov 18,2003 10:57</div>
<div class="t" style="left:459px;top:468px;">(98.6 kg)</div>
<div class="t" style="left:269px;top:481px;">PN</div>
<div class="t" style="left:291px;top:481px;">6</div>
<div class="t" style="left:345px;top:481px;">Feb 07,2004 17:26</div>
<div style="left:607px;top:400px;width:249px;height:101px;background:#ffffff;"></div>
<div style="left:607px;top:400px;width:249px;height:1px;background:#808080;"></div>
<div style="left:607px;top:400px;width:1px;height:101px;background:#808080;"></div>
<div style="left:607px;top:500px;width:249px;height:1px;background:#ffffff;"></div>
<div style="left:855px;top:400px;width:1px;height:101px;background:#ffffff;"></div>
<div style="left:608px;top:401px;width:247px;height:1px;background:#404040;"></div>
<div style="left:608px;top:401px;width:1px;height:99px;background:#404040;"></div>
<div style="left:608px;top:499px;width:247px;height:1px;background:#d4d0c8;"></div>
<div style="left:854px;top:401px;width:1px;height:99px;background:#d4d0c8;"></div>
<div style="left:607px;top:500px;width:1px;height:1px;background:#808080;"></div>
<div style="left:855px;top:400px;width:1px;height:1px;background:#808080;"></div>
<div class="t" style="left:611px;top:403px;letter-spacing:0.2px;">No data found</div>
<div style="left:516px;top:506px;width:339px;height:1px;background:#ffffff;"></div>
<div style="left:855px;top:506px;width:1px;height:1px;background:#808080;"></div>
<div style="left:5px;top:506px;width:1px;height:16px;background:#ffffff;"></div>
<div style="left:6px;top:522px;width:1px;height:1px;background:#ffffff;"></div>
<div style="left:79px;top:506px;width:1px;height:16px;background:#404040;"></div>
<div style="left:78px;top:506px;width:1px;height:16px;background:#808080;"></div>
<div style="left:7px;top:523px;width:71px;height:1px;background:#404040;"></div>
<div style="left:6px;top:522px;width:72px;height:1px;background:#808080;"></div>
<div style="left:78px;top:522px;width:1px;height:1px;background:#404040;"></div>
<div class="t" style="left:7px;top:509px;width:81.56px;text-align:center;">Cover Sheet</div>
<div style="left:80px;top:506px;width:1px;height:14px;background:#ffffff;"></div>
<div style="left:81px;top:520px;width:1px;height:1px;background:#ffffff;"></div>
<div style="left:132px;top:506px;width:1px;height:14px;background:#404040;"></div>
<div style="left:131px;top:506px;width:1px;height:14px;background:#808080;"></div>
<div style="left:82px;top:521px;width:49px;height:1px;background:#404040;"></div>
<div style="left:81px;top:520px;width:50px;height:1px;background:#808080;"></div>
<div style="left:131px;top:520px;width:1px;height:1px;background:#404040;"></div>
<div class="t" style="left:81px;top:507px;width:56.98px;text-align:center;">Problems</div>
<div style="left:133px;top:506px;width:1px;height:14px;background:#ffffff;"></div>
<div style="left:134px;top:520px;width:1px;height:1px;background:#ffffff;"></div>
<div style="left:174px;top:506px;width:1px;height:14px;background:#404040;"></div>
<div style="left:173px;top:506px;width:1px;height:14px;background:#808080;"></div>
<div style="left:135px;top:521px;width:38px;height:1px;background:#404040;"></div>
<div style="left:134px;top:520px;width:39px;height:1px;background:#808080;"></div>
<div style="left:173px;top:520px;width:1px;height:1px;background:#404040;"></div>
<div class="t" style="left:132px;top:507px;width:44.69px;text-align:center;">Meds</div>
<div style="left:175px;top:506px;width:1px;height:14px;background:#ffffff;"></div>
<div style="left:176px;top:520px;width:1px;height:1px;background:#ffffff;"></div>
<div style="left:217px;top:506px;width:1px;height:14px;background:#404040;"></div>
<div style="left:216px;top:506px;width:1px;height:14px;background:#808080;"></div>
<div style="left:177px;top:521px;width:39px;height:1px;background:#404040;"></div>
<div style="left:176px;top:520px;width:40px;height:1px;background:#808080;"></div>
<div style="left:216px;top:520px;width:1px;height:1px;background:#404040;"></div>
<div class="t" style="left:177px;top:507px;width:45.81px;text-align:center;">Orders</div>
<div style="left:218px;top:506px;width:1px;height:14px;background:#ffffff;"></div>
<div style="left:219px;top:520px;width:1px;height:1px;background:#ffffff;"></div>
<div style="left:259px;top:506px;width:1px;height:14px;background:#404040;"></div>
<div style="left:258px;top:506px;width:1px;height:14px;background:#808080;"></div>
<div style="left:220px;top:521px;width:38px;height:1px;background:#404040;"></div>
<div style="left:219px;top:520px;width:39px;height:1px;background:#808080;"></div>
<div style="left:258px;top:520px;width:1px;height:1px;background:#404040;"></div>
<div class="t" style="left:218px;top:507px;width:44.69px;text-align:center;">Notes</div>
<div style="left:260px;top:506px;width:1px;height:14px;background:#ffffff;"></div>
<div style="left:261px;top:520px;width:1px;height:1px;background:#ffffff;"></div>
<div style="left:311px;top:506px;width:1px;height:14px;background:#404040;"></div>
<div style="left:310px;top:506px;width:1px;height:14px;background:#808080;"></div>
<div style="left:262px;top:521px;width:48px;height:1px;background:#404040;"></div>
<div style="left:261px;top:520px;width:49px;height:1px;background:#808080;"></div>
<div style="left:310px;top:520px;width:1px;height:1px;background:#404040;"></div>
<div class="t" style="left:261px;top:507px;width:55.87px;text-align:center;">Consults</div>
<div style="left:312px;top:506px;width:1px;height:14px;background:#ffffff;"></div>
<div style="left:313px;top:520px;width:1px;height:1px;background:#ffffff;"></div>
<div style="left:359px;top:506px;width:1px;height:14px;background:#404040;"></div>
<div style="left:358px;top:506px;width:1px;height:14px;background:#808080;"></div>
<div style="left:314px;top:521px;width:44px;height:1px;background:#404040;"></div>
<div style="left:313px;top:520px;width:45px;height:1px;background:#808080;"></div>
<div style="left:358px;top:520px;width:1px;height:1px;background:#404040;"></div>
<div class="t" style="left:313px;top:507px;width:51.40px;text-align:center;">Surgery</div>
<div style="left:360px;top:506px;width:1px;height:14px;background:#ffffff;"></div>
<div style="left:361px;top:520px;width:1px;height:1px;background:#ffffff;"></div>
<div style="left:423px;top:506px;width:1px;height:14px;background:#404040;"></div>
<div style="left:422px;top:506px;width:1px;height:14px;background:#808080;"></div>
<div style="left:362px;top:521px;width:60px;height:1px;background:#404040;"></div>
<div style="left:361px;top:520px;width:61px;height:1px;background:#808080;"></div>
<div style="left:422px;top:520px;width:1px;height:1px;background:#404040;"></div>
<div class="t" style="left:361px;top:507px;width:69.27px;text-align:center;">D/C Summ</div>
<div style="left:424px;top:506px;width:1px;height:14px;background:#ffffff;"></div>
<div style="left:425px;top:520px;width:1px;height:1px;background:#ffffff;"></div>
<div style="left:465px;top:506px;width:1px;height:14px;background:#404040;"></div>
<div style="left:464px;top:506px;width:1px;height:14px;background:#808080;"></div>
<div style="left:426px;top:521px;width:38px;height:1px;background:#404040;"></div>
<div style="left:425px;top:520px;width:39px;height:1px;background:#808080;"></div>
<div style="left:464px;top:520px;width:1px;height:1px;background:#404040;"></div>
<div class="t" style="left:422px;top:507px;width:44.69px;text-align:center;">Labs</div>
<div style="left:466px;top:506px;width:1px;height:14px;background:#ffffff;"></div>
<div style="left:467px;top:520px;width:1px;height:1px;background:#ffffff;"></div>
<div style="left:515px;top:506px;width:1px;height:14px;background:#404040;"></div>
<div style="left:514px;top:506px;width:1px;height:14px;background:#808080;"></div>
<div style="left:468px;top:521px;width:46px;height:1px;background:#404040;"></div>
<div style="left:467px;top:520px;width:47px;height:1px;background:#808080;"></div>
<div style="left:514px;top:520px;width:1px;height:1px;background:#404040;"></div>
<div class="t" style="left:467px;top:507px;width:53.63px;text-align:center;">Reports</div>
<div style="left:5px;top:526px;width:200px;height:1px;background:#808080;"></div>
<div style="left:5px;top:526px;width:1px;height:16px;background:#808080;"></div>
<div style="left:5px;top:541px;width:200px;height:1px;background:#ffffff;"></div>
<div style="left:204px;top:526px;width:1px;height:16px;background:#ffffff;"></div>
<div style="left:207px;top:526px;width:467px;height:1px;background:#808080;"></div>
<div style="left:207px;top:526px;width:1px;height:16px;background:#808080;"></div>
<div style="left:207px;top:541px;width:467px;height:1px;background:#ffffff;"></div>
<div style="left:673px;top:526px;width:1px;height:16px;background:#ffffff;"></div>
<div style="left:676px;top:526px;width:142px;height:1px;background:#808080;"></div>
<div style="left:676px;top:526px;width:1px;height:16px;background:#808080;"></div>
<div style="left:676px;top:541px;width:142px;height:1px;background:#ffffff;"></div>
<div style="left:817px;top:526px;width:1px;height:16px;background:#ffffff;"></div>
<div style="left:820px;top:526px;width:36px;height:1px;background:#808080;"></div>
<div style="left:820px;top:526px;width:1px;height:16px;background:#808080;"></div>
<div style="left:820px;top:541px;width:36px;height:1px;background:#ffffff;"></div>
<div style="left:855px;top:526px;width:1px;height:16px;background:#ffffff;"></div>
</body></html>
